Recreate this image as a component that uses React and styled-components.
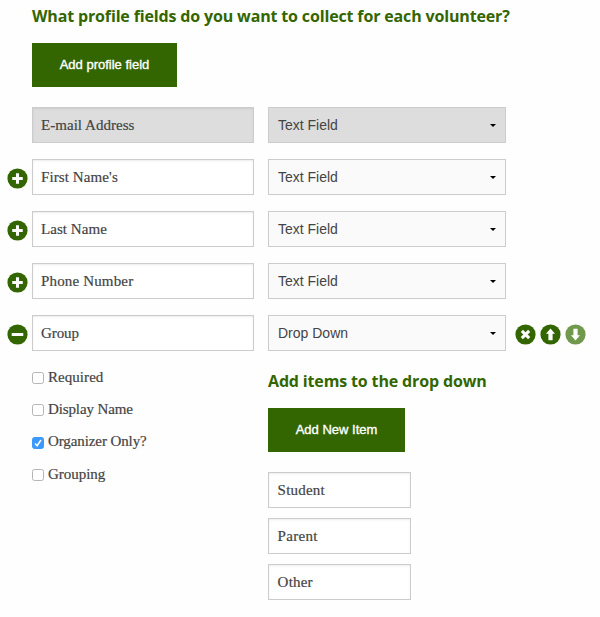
import styled, { createGlobalStyle } from "styled-components";

const GlobalStyle = createGlobalStyle`
  * {
    box-sizing: border-box;
  }
  body {
    margin: 0;
    background: #fefefe;
    color: #444;
    font-family: "Liberation Serif", Georgia, serif;
  }
`;
const Page = styled.main`
  padding: 5px 0 0 7px;
  width: 600px;
  height: 617px;
  overflow: hidden;
`;
const Intro = styled.div`
  padding-left: 25px;
`;
const Title = styled.h2`
  margin: 0;
  height: 22px;
  line-height: 22px;
  font-family: "Open Sans", sans-serif;
  font-size: 16px;
  font-weight: 700;
  color: #336600;
  white-space: nowrap;
  letter-spacing: -0.15px;
`;
const Button = styled.button`
  display: block;
  margin: ${props => props.$top}px 0 0;
  padding: 0 0 2px;
  width: ${props => props.$width}px;
  height: 44px;
  border: 0;
  background: #336600;
  color: #fff;
  font-family: "Liberation Sans", Arial, sans-serif;
  font-size: 13px;
  -webkit-text-stroke: 0.35px #fff;
`;
const Rows = styled.div`
  display: grid;
  gap: 16px;
  margin-top: 20px;
`;
const Row = styled.div`
  display: grid;
  grid-template-columns: 25px 222px 14px 238px auto;
  height: 36px;
`;
const Box = styled.div`
  display: flex;
  align-items: center;
  height: 36px;
  border: 1px solid #ccc;
  white-space: nowrap;
`;
const Field = styled(Box)`
  padding: 1px 8px 0 ${props => props.$indent || 8}px;
  background: ${props => props.$disabled ? "#ddd" : "#fff"};
  box-shadow: inset 0 1px 2px rgba(0, 0, 0, 0.08);
  font-size: 15px;
  -webkit-text-stroke: 0.2px #444;
  letter-spacing: ${props => props.$spacing || 0}px;
`;
const Select = styled(Box)`
  grid-column: 4;
  justify-content: space-between;
  padding: 0 9px;
  background: ${props => props.$disabled ? "#ddd" : "#fafafa"};
  font-family: "Liberation Sans", Arial, sans-serif;
  font-size: 14px;
`;
const Caret = styled.span`
  margin-top: 1px;
  border: 3px solid transparent;
  border-top: 3px solid #000;
  border-bottom: 0;
`;
const IconCell = styled.div`
  grid-column: ${props => props.$column};
  display: flex;
  gap: 4px;
  padding: 9px 0 0 ${props => props.$left || 0}px;
`;
const Columns = styled.div`
  display: grid;
  grid-template-columns: 236px 238px;
  padding-left: 25px;
`;
const Checks = styled.div`
  padding-top: 16px;
`;
const Check = styled.label`
  display: flex;
  align-items: center;
  gap: 4px;
  height: 20px;
  margin-bottom: 12.4px;
  font-size: 15px;
  -webkit-text-stroke: 0.2px #444;
  white-space: nowrap;
  letter-spacing: ${props => props.$spacing || 0}px;
`;
const Tick = styled.span`
  display: flex;
  align-items: center;
  justify-content: center;
  width: 12px;
  height: 12px;
  margin-top: 2px;
  border: 1px solid ${props => props.$checked ? "#3b99fc" : "#b5b5b5"};
  border-radius: 2.5px;
  background: ${props => props.$checked ? "#3b99fc" : "#fff"};
`;
const DropItems = styled.div`
  padding-top: 19px;
`;
const ItemList = styled.div`
  display: grid;
  gap: 10px;
  width: 143px;
  margin-top: 20px;
`;

const shapes = {
  plus: "M10 5v10M5 10h10",
  minus: "M4.5 10h11",
  remove: "M6.5 6.5l7 7M13.5 6.5l-7 7",
};
const arrow = "M10 4.2l4.3 5h-2.3v6.3h-4V9.2H5.7z";

function Icon({ name }) {
  const isArrow = name === "up" || name === "down";
  return (
    <svg width="21" height="21" viewBox="0 0 20 20" aria-hidden="true">
      <circle cx="10" cy="10" r="9.6" fill={name === "down" ? "#70994d" : "#336600"} />
      {isArrow ? (
        <path d={arrow} fill="#fff" transform={name === "down" ? "rotate(180 10 10)" : undefined} />
      ) : (
        <path d={shapes[name]} stroke="#fff" strokeWidth="2.9" />
      )}
    </svg>
  );
}

const fields = [
  { label: "E-mail Address", type: "Text Field", disabled: true, spacing: 0.04 },
  { label: "First Name's", type: "Text Field", icon: "plus", spacing: 0.1 },
  { label: "Last Name", type: "Text Field", icon: "plus", spacing: 0.05 },
  { label: "Phone Number", type: "Text Field", icon: "plus", spacing: 0.16 },
  { label: "Group", type: "Drop Down", icon: "minus", spacing: -0.1 },
];
const options = [
  { label: "Required", spacing: 0.05 },
  { label: "Display Name", spacing: -0.12 },
  { label: "Organizer Only?", checked: true, spacing: -0.1 },
  { label: "Grouping", spacing: -0.03 },
];
const items = [
  { label: "Student", spacing: 0.22 },
  { label: "Parent", spacing: 0.3 },
  { label: "Other", spacing: 0.2 },
];

export default function App() {
  return (
    <Page>
      <GlobalStyle />
      <Intro>
        <Title>What profile fields do you want to collect for each volunteer?</Title>
        <Button $top={16} $width={145}>Add profile field</Button>
      </Intro>
      <Rows>
        {fields.map(field => (
          <Row key={field.label}>
            <IconCell $column={1}>{field.icon && <Icon name={field.icon} />}</IconCell>
            <Field $disabled={field.disabled} $spacing={field.spacing}>{field.label}</Field>
            <Select $disabled={field.disabled}>
              {field.type}
              <Caret />
            </Select>
            {field.icon === "minus" && (
              <IconCell $column={5} $left={9}>
                <Icon name="remove" />
                <Icon name="up" />
                <Icon name="down" />
              </IconCell>
            )}
          </Row>
        ))}
      </Rows>
      <Columns>
        <Checks>
          {options.map(option => (
            <Check key={option.label} $spacing={option.spacing}>
              <Tick $checked={option.checked}>
                {option.checked && (
                  <svg width="10" height="10" viewBox="0 0 10 10">
                    <path d="M2 5.4l2.1 2.3L8 2" fill="none" stroke="#fff" strokeWidth="1.5" />
                  </svg>
                )}
              </Tick>
              {option.label}
            </Check>
          ))}
        </Checks>
        <DropItems>
          <Title>Add items to the drop down</Title>
          <Button $top={16} $width={137}>Add New Item</Button>
          <ItemList>
            {items.map(item => (
              <Field key={item.label} $indent={8.6} $spacing={item.spacing}>{item.label}</Field>
            ))}
          </ItemList>
        </DropItems>
      </Columns>
    </Page>
  );
}
